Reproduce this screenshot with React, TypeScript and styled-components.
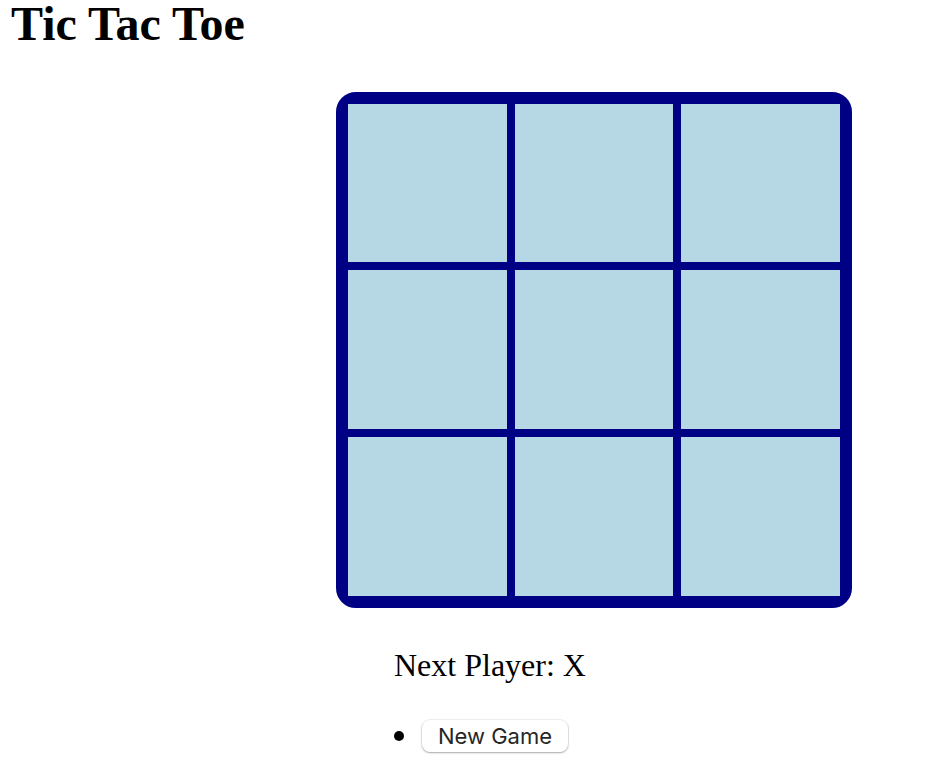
import React, { useState } from "react";
import styled, { createGlobalStyle } from "styled-components";

const GlobalStyle = createGlobalStyle`
  * { box-sizing: border-box; }
  body {
    margin: 0;
    background: #fff;
    color: #000;
    font-family: "Liberation Serif", "Times New Roman", serif;
    font-size: 32px;
  }
`;

const Page = styled.main`
  padding: 0 11px 16px;
`;

const Title = styled.h1`
  margin: 0;
  font-size: 48px;
  line-height: 48px;
  font-weight: 700;
`;

const Game = styled.section`
  width: fit-content;
  margin: 44px 89px 0 auto;
`;

const Board = styled.div`
  display: grid;
  grid-template-columns: repeat(3, 1fr);
  grid-template-rows: 158fr 159fr 159fr;
  gap: 8px;
  width: 516px;
  aspect-ratio: 1;
  border: 12px solid #000084;
  border-radius: 20px;
  background: #000084;
`;

const Square = styled.button`
  border: 0;
  border-radius: 0;
  padding: 0;
  background: #b6d7e4;
  color: #000084;
  font: 700 96px "Liberation Serif", serif;
`;

const Info = styled.div`
  padding: 39px 0 0 58px;
`;

const Status = styled.p`
  margin: 0;
  line-height: 36px;
`;

const Actions = styled.ul`
  margin: 37px 0 0;
  padding: 0;
  list-style: none;
`;

const Action = styled.li`
  display: flex;
  align-items: center;
  gap: 18px;

  &::before {
    content: "";
    width: 10px;
    height: 10px;
    border-radius: 50%;
    background: #000;
  }
`;

const NewGame = styled.button`
  height: 32px;
  padding: 0 16px;
  border: 0;
  border-radius: 8px;
  background: #fff;
  color: #262626;
  font: 22px/32px Inter, sans-serif;
  box-shadow: 0 0 0 1px rgba(0, 0, 0, 0.06), 0 1px 2px rgba(0, 0, 0, 0.3);
`;

const lines = [
  [0, 1, 2], [3, 4, 5], [6, 7, 8],
  [0, 3, 6], [1, 4, 7], [2, 5, 8],
  [0, 4, 8], [2, 4, 6],
];

const emptyBoard: string[] = Array(9).fill("");

function findWinner(squares: string[]): string {
  const line = lines.find(
    ([a, b, c]) => squares[a] && squares[a] === squares[b] && squares[a] === squares[c]
  );
  return line ? squares[line[0]] : "";
}

export default function App() {
  const [squares, setSquares] = useState(emptyBoard);
  const winner = findWinner(squares);
  const next = squares.filter(Boolean).length % 2 === 0 ? "X" : "O";

  const play = (index: number) => {
    if (winner || squares[index]) return;
    setSquares(squares.map((value, i) => (i === index ? next : value)));
  };

  return (
    <Page>
      <GlobalStyle />
      <Title>Tic Tac Toe</Title>
      <Game>
        <Board>
          {squares.map((value, i) => (
            <Square key={i} aria-label={`Square ${i + 1} ${value}`} onClick={() => play(i)}>
              {value}
            </Square>
          ))}
        </Board>
        <Info>
          <Status>{winner ? `Winner: ${winner}` : `Next Player: ${next}`}</Status>
          <Actions>
            <Action>
              <NewGame onClick={() => setSquares(emptyBoard)}>New Game</NewGame>
            </Action>
          </Actions>
        </Info>
      </Game>
    </Page>
  );
}
